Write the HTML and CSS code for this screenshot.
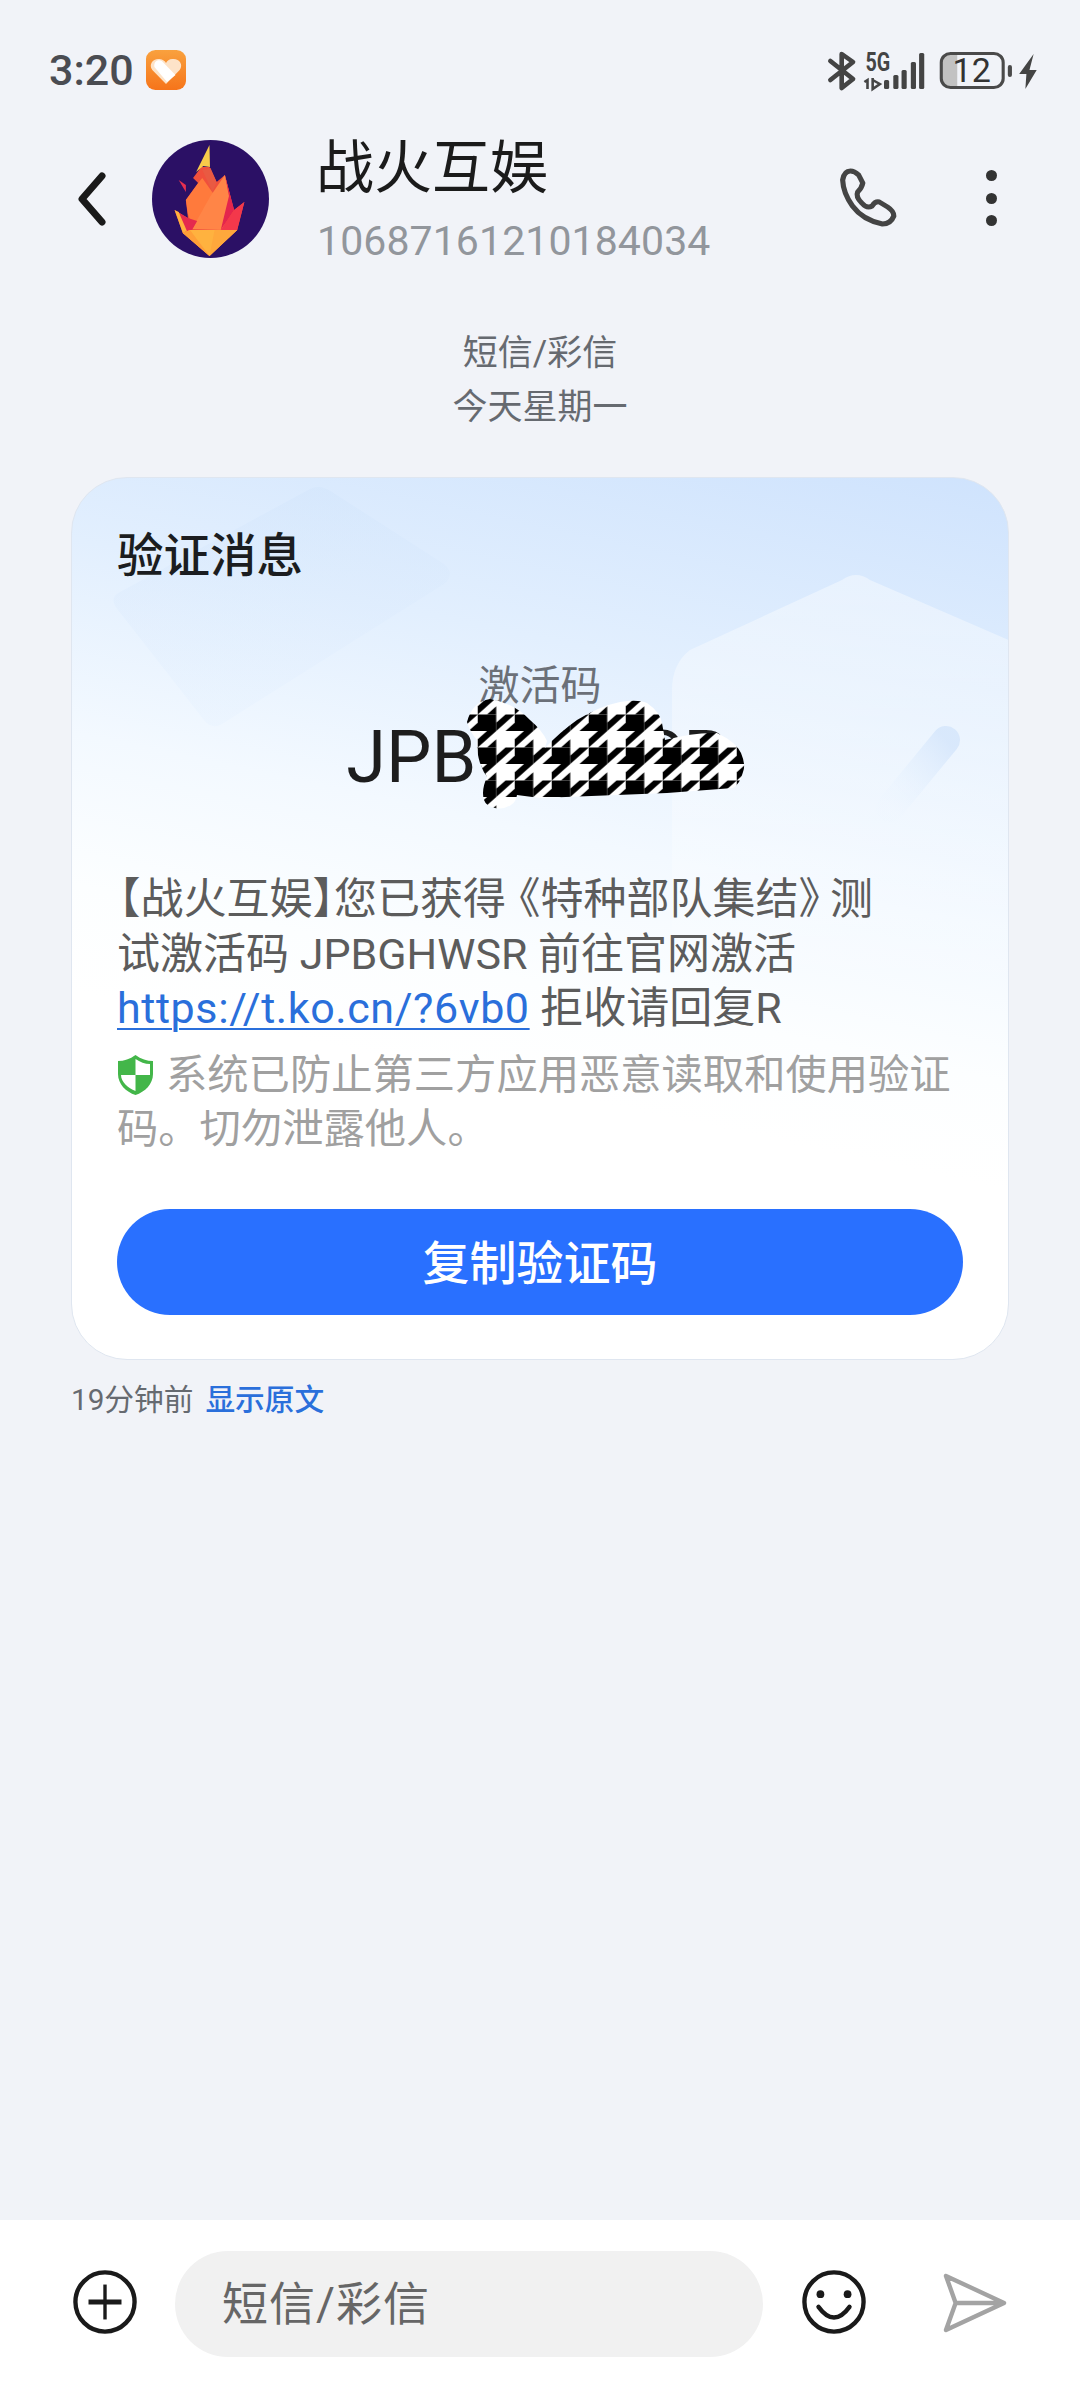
FILE: index.html
```html
<!DOCTYPE html>
<html lang="zh-CN">
<head>
<meta charset="utf-8">
<title>战火互娱</title>
<link rel="stylesheet" href="styles.css">
</head>
<body>
<div class="page">
  <div class="status">
    <div class="status-left">
      <span class="clock">3:20</span>
      <svg class="app-icon" viewBox="0 0 38 40" preserveAspectRatio="none">
        <defs><linearGradient id="ai" x1="0" y1="0" x2="0" y2="1"><stop offset="0" stop-color="#f9a13e"/><stop offset="1" stop-color="#f6741a"/></linearGradient></defs>
        <rect width="38" height="40" rx="9" fill="url(#ai)"/>
        <path d="M19 34 L6 20 C2 14 7 8 13 9 C16 9.500 18 11 19 13 C20 11 22 9 25 9 C31 8 36 14 32 20 Z" fill="#fde3c8"/>
        <path d="M8 17 C7 12 11 9 15 11 L28 25 L20 32 Z" fill="#fff"/>
      </svg>
    </div>
    <svg class="status-right" viewBox="810 44 220 48" preserveAspectRatio="none">
      <path d="M821 59 L843 77 L832 86 L832 52 L843 60 L821 78" fill="none" stroke="#444" stroke-width="4.500" stroke-linejoin="round" stroke-linecap="round"/>
      <text class="net" x="855" y="69" textLength="24" lengthAdjust="spacingAndGlyphs">5G</text>
      <path d="M857 87 V78 L854 80 M862 76 V87 L869 82 L862 78" fill="none" stroke="#444" stroke-width="2.500"/>
      <rect x="873" y="78" width="5" height="9" rx="1.500" fill="#444"/>
      <rect x="882" y="73" width="5" height="14" rx="1.500" fill="#444"/>
      <rect x="890" y="68" width="5" height="19" rx="1.500" fill="#444"/>
      <rect x="899" y="60" width="5" height="27" rx="1.500" fill="#444"/>
      <rect x="907" y="51" width="5" height="36" rx="1.500" fill="#444"/>
      <path d="M938 52 H944 V85 H938 Q929 85 929 76 V61 Q929 52 938 52 Z" fill="#c2c2c2"/>
      <rect x="928.500" y="51.500" width="60" height="34" rx="9" fill="none" stroke="#4a4a4a" stroke-width="3"/>
      <text class="batt" x="958" y="80" text-anchor="middle">12</text>
      <rect x="993" y="63" width="4" height="12" rx="2" fill="#4a4a4a"/>
      <path d="M1018 52 L1004 72 H1011 L1010 87 L1021 68 H1014 Z" fill="#444"/>
    </svg>
  </div>

  <header class="header">
    <svg class="back" viewBox="0 0 30 56"><path d="M25 5 L5 28 L25 51" fill="none" stroke="#1a1a1a" stroke-width="7" stroke-linecap="round" stroke-linejoin="round"/></svg>
    <svg class="avatar" viewBox="147 140 114 118" preserveAspectRatio="none">
      <ellipse cx="204" cy="199" rx="57" ry="59" fill="#2b1065"/>
      <path d="M187 178 L192 183 L180 200 L182 218 L169 210 L177 233 L203 256 L230 230 L237 202 L227 210 L218 175 L210 182 L203 167 L195 167 Z" fill="#f0503c"/>
      <path d="M203 145 L203.500 167 L197 166 L190 172 Z" fill="#f8cb4a"/>
      <path d="M173 180 L180 185 L180 192 Z" fill="#e8304f"/>
      <path d="M180 200 L192 183 L196 178 L207 194 L192 220 L186 226 L182 214 Z" fill="#ff7a3c"/>
      <path d="M196 170 L204 168 L210 182 L206 192 Z" fill="#e95a42"/>
      <path d="M218 175 L204 196 L186 229 L216 230 L224 200 Z" fill="#ff8547"/>
      <path d="M218 175 L227 210 L214 230 L222 196 Z" fill="#e4254d"/>
      <path d="M172 212 L182 218 L191 221 L186 230 L179 231 Z" fill="#e52a4e"/>
      <path d="M169 210 L173 212 L181 231 L177 233 Z" fill="#ffb23f"/>
      <path d="M237 202 L230 230 L214 230 L227 210 Z" fill="#f3384b"/>
      <path d="M184 230 L230 230 L203 256 L177 233 Z" fill="#ffb23f"/>
      <path d="M177 233 L184 230 L203 256 Z" fill="#ff9f38"/>
      <path d="M203 256 L208 230 L230 230 Z" fill="#ffa83c"/>
    </svg>
    <div class="contact">
      <div class="name">战火互娱</div>
      <div class="number">10687161210184034</div>
    </div>
    <svg class="phone" viewBox="830 168 60 62" preserveAspectRatio="none"><path d="M842 173 Q836 173 834.500 182 Q835 195 844 208 Q854 222 873 226 Q881 226 884 218 Q884 213 878 209 L870 204 Q866 203 863 208 Q858 211 853 205 Q847 199 849 194 Q853 190 854 185 L850 177 Q846 173 842 173 Z" fill="none" stroke="#444" stroke-width="5" stroke-linejoin="round"/></svg>
    <div class="more"><i></i><i></i><i></i></div>
  </header>

  <div class="labels">
    <div>短信/彩信</div>
    <div>今天星期一</div>
  </div>

  <article class="card">
    <svg class="decor" viewBox="71 477 939 883">
      <defs>
        <linearGradient id="d1" x1="0" y1="0" x2="0" y2="1"><stop offset="0" stop-color="#cfe3fb" stop-opacity=".35"/><stop offset="1" stop-color="#e4f0fe" stop-opacity=".3"/></linearGradient>
        <linearGradient id="d2" x1="0" y1="0" x2="0" y2="1"><stop offset="0" stop-color="#fff" stop-opacity=".42"/><stop offset=".7" stop-color="#fff" stop-opacity=".25"/><stop offset="1" stop-color="#fff" stop-opacity="0"/></linearGradient>
        <linearGradient id="d3" x1="1" y1="0" x2="0" y2="1"><stop offset="0" stop-color="#d2e4fb" stop-opacity=".75"/><stop offset="1" stop-color="#eaf4ff" stop-opacity=".1"/></linearGradient>
      </defs>
      <path d="M310 489 Q320 484 332 492 L444 564 Q456 574 444 584 L222 724 Q212 730 204 720 L118 610 Q108 598 120 592 Z" fill="url(#d1)"/>
      <path d="M842 580 Q856 570 870 580 L1020 645 V1000 H672 V690 Q672 664 690 650 Z" fill="url(#d2)"/>
      <path d="M946 740 L890 808" fill="none" stroke="url(#d3)" stroke-width="28" stroke-linecap="round"/>
    </svg>
    <h2 class="card-title">验证消息</h2>
    <div class="code-label">激活码</div>
    <div class="code">JPBGHWSR</div>
    <p class="body-text"><span class="halt start">【</span>战火互娱<span class="halt">】</span>您已获得<span class="halt open">《</span>特种部队集结<span class="halt close">》</span>测<br>试激活码 JPBGHWSR 前往官网激活<br><a class="link">https://t.ko.cn/?6vb0</a> 拒收请回复R</p>
    <p class="notice"><svg class="shield" viewBox="0 0 37 42"><path d="M18.500 1 C24 5 30 7 36 7 V20 C36 30 28 38 18.500 41 C9 38 1 30 1 20 V7 C7 7 13 5 18.500 1 Z" fill="#43b649"/><path d="M18.500 5 C23 8 28 10 33 10 V21 H18.500 Z M18.500 21 V37 C11 34 4 28 4 21 Z" fill="#fff"/></svg>系统已防止第三方应用恶意读取和使用验证<br>码。切勿泄露他人。</p>
    <div class="copy">复制验证码</div>
    <svg class="redact" viewBox="71 477 939 883">
      <defs>
        <pattern id="hound" width="37" height="33" patternUnits="userSpaceOnUse" patternTransform="translate(33.750 5)">
          <rect width="37" height="33" fill="#fff"/>
          <g transform="scale(9.250 8.250)" fill="#000">
            <rect x="0" y="2" width="2" height="2"/>
            <path d="M0 1 L1 0 H2 L0 2 Z M1 2 L2 1 V2 Z"/>
            <path d="M2 3 L3 2 H4 L2 4 Z M3 4 L4 3 V4 Z"/>
          </g>
        </pattern>
      </defs>
      <path d="M467 722 Q472 702 490 699 Q514 703 530 720 Q542 730 547 741 L545 748 Q560 732 577 720 Q600 706 620 702 Q638 699 647 703 Q660 712 662 723 L665 740 Q695 732 717 733 Q736 742 741 753 Q746 765 743 772 Q740 784 733 788 L667 793 L617 795 L540 798 L517 795 Q516 802 511 805 Q503 810 495 808 Q486 806 484 800 Q481 790 487 777 L480 763 Q476 750 477 740 Q470 732 467 722 Z" fill="url(#hound)"/>
    </svg>
  </article>

  <div class="meta"><span>19分钟前</span><a class="show">显示原文</a></div>

  <div class="spacer"></div>

  <footer class="composer">
    <svg class="ic-plus" viewBox="0 0 66 66"><circle cx="33" cy="33" r="30.500" fill="none" stroke="#1a1a1a" stroke-width="4.500"/><path d="M33 15 V51" stroke="#1a1a1a" stroke-width="3.500"/><path d="M16 33 H50" stroke="#1a1a1a" stroke-width="5"/></svg>
    <div class="input">短信/彩信</div>
    <svg class="ic-smile" viewBox="0 0 66 66"><circle cx="33" cy="33" r="30.500" fill="none" stroke="#1a1a1a" stroke-width="4.500"/><circle cx="19" cy="25" r="4" fill="#1a1a1a"/><circle cx="47" cy="25" r="4" fill="#1a1a1a"/><path d="M17 38 Q33 60 49 38" fill="none" stroke="#1a1a1a" stroke-width="4.500" stroke-linecap="round"/></svg>
    <svg class="ic-send" viewBox="0 0 66 62"><path d="M3 3 L63 31 L3 59 L13 31 Z M13 31 H63" fill="none" stroke="#a3a3a3" stroke-width="4.500" stroke-linejoin="round"/></svg>
  </footer>
</div>
</body>
</html>
```
FILE: styles.css
```css
* { box-sizing: border-box; }
html, body { margin: 0; padding: 0; }
body {
  font-family: Roboto, "Noto Sans CJK SC", sans-serif;
  background: #f1f3f8;
  color: #1a1a1a;
}
.page {
  width: 1080px;
  height: 2387px;
  display: flex;
  flex-direction: column;
  overflow: hidden;
}
.status {
  height: 40px;
  margin-top: 50px;
  padding-left: 49px;
  display: flex;
  justify-content: space-between;
  align-items: center;
}
.status-left { display: flex; align-items: center; gap: 12px; }
.clock { font-size: 43px; font-weight: 500; color: #4a4c52; line-height: 40px; }
.app-icon { width: 40px; height: 40px; display: block; }
.status-right { width: 227px; height: 48px; display: block; margin-top: -1px; margin-right: 34px; flex: none; }
.net { font: 700 25px Roboto, sans-serif; fill: #444; }
.batt { font: 400 33px Roboto, sans-serif; fill: #333; }

.header {
  height: 118px;
  margin-top: 50px;
  display: flex;
  align-items: flex-start;
}
.back { width: 30px; height: 56px; margin: 31px 0 0 77px; flex: none; }
.avatar { width: 117px; height: 118px; margin-left: 45px; flex: none; }
.contact { margin-left: 49px; width: 522px; flex: none; }
.name { font-size: 58px; line-height: 56px; height: 56px; color: #1b1b1b; margin-left: -2px; }
.number { font-size: 41px; line-height: 50px; margin-top: 20px; color: #92969c; letter-spacing: .1px; margin-left: -1px; }
.phone { width: 62px; height: 62px; margin: 26px 0 0 -2px; flex: none; }
.more { margin: 30px 0 0 86px; display: flex; flex-direction: column; gap: 11.500px; }
.more i { display: block; width: 11px; height: 11px; border-radius: 50%; background: #333; }

.labels {
  margin-top: 69px;
  text-align: center;
  font-size: 35px;
  line-height: 54px;
  color: #666a70;
}

.card {
  position: relative;
  width: 938px;
  height: 883px;
  margin: 42px 0 0 71px;
  padding: 48px 45px 0;
  border: 1px solid #dfe6f0;
  border-radius: 56px;
  overflow: hidden;
  background: linear-gradient(192deg, #cfe3fd 0%, #e2effe 24%, #f3f9ff 42%, #fcfeff 56%, #ffffff 66%);
}
.decor, .redact { position: absolute; left: -1px; top: -1px; width: 939px; height: 883px; }
.card-title, .code-label, .code, .body-text, .notice, .copy { position: relative; }
.card-title { margin: 0; font-size: 46.500px; line-height: 60px; font-weight: 500; color: #1b1d20; }
.code-label { margin-top: 75px; text-align: center; font-size: 41px; line-height: 50px; color: #6b7078; }
.code { margin-top: 7px; padding-right: 6px; text-align: center; font-size: 72px; line-height: 80px; color: #1d1d1d; }
.body-text { margin: 74px 0 0; font-size: 43px; line-height: 54.500px; color: #5c5c5c; white-space: nowrap; }
.halt { font-feature-settings: "halt"; }
.start { margin-left: 2px; }
.open { margin-left: 13px; }
.close { margin-right: 10px; }
.link { color: #2a6fdb; text-decoration: underline; text-underline-offset: 5px; text-decoration-thickness: 2px; letter-spacing: .6px; }
.notice { margin: 12.500px 0 0; font-size: 41.300px; line-height: 54px; color: #a0a0a0; white-space: nowrap; }
.shield { width: 37px; height: 42px; margin-right: 12px; vertical-align: -7px; }
.copy {
  margin-top: 53px;
  height: 106px;
  padding-bottom: 6px;
  border-radius: 53px;
  background: #2970ff;
  color: #fff;
  font-size: 47px;
  font-weight: 500;
  display: flex;
  align-items: center;
  justify-content: center;
}

.meta {
  margin: 20px 0 0 71px;
  display: flex;
  gap: 12px;
  font-size: 29.700px;
  line-height: 40px;
  color: #666a70;
}
.show { color: #2a6fdb; font-weight: 500; }
.spacer { flex: 1; }

.composer {
  height: 167px;
  background: #fff;
  display: flex;
  align-items: flex-start;
  padding-left: 73px;
}
.ic-plus { width: 64px; height: 64px; margin-top: 50px; flex: none; }
.input {
  width: 588px;
  height: 106px;
  margin: 31px 0 0 38px;
  padding-left: 47px;
  border-radius: 53px;
  background: #f1f1f1;
  font-size: 46px;
  letter-spacing: 1px;
  line-height: 106px;
  color: #666;
  flex: none;
}
.ic-smile { width: 64px; height: 64px; margin: 50px 0 0 39px; flex: none; }
.ic-send { width: 64px; height: 60px; margin: 53px 0 0 77px; flex: none; }
```
